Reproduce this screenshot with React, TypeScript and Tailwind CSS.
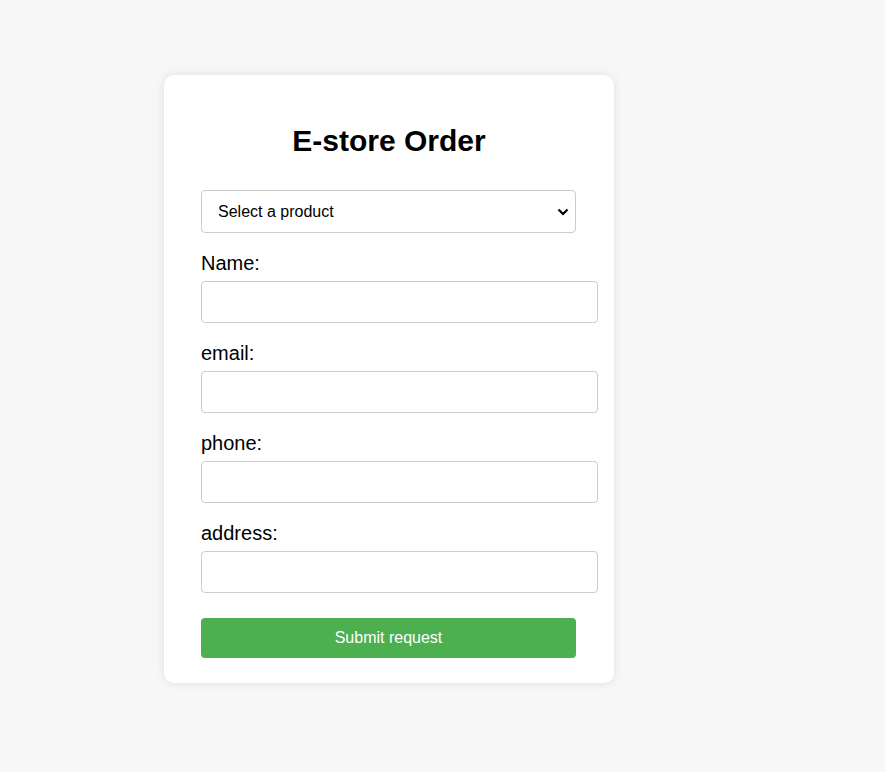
import React from 'react'

const fields = ['Name:', 'email:', 'phone:', 'address:']

export default function App(): JSX.Element {
  return (
    <div className="min-h-[772px] w-full bg-[#f7f7f7] pt-[75px] font-['Liberation_Sans',Arial,sans-serif] text-black">
      <div className="ml-[164px] w-[450px] rounded-[10px] bg-white px-[37px] pt-[49px] pb-[25px] shadow-[0_0_10px_rgba(0,0,0,0.1)]">
        <h1 className="text-center text-[30px] leading-[34px] font-bold">
          E-store Order
        </h1>
        <form className="mt-[32px]" onSubmit={e => e.preventDefault()}>
          <div className="relative w-[375px]">
            <select
              defaultValue=""
              className="block h-[43px] w-[375px] appearance-none rounded-[4px] border border-[#ccc] bg-white pl-[16px] pr-[30px] text-[16px] text-black"
            >
              <option value="">Select a product</option>
              <option value="1">Laptop</option>
              <option value="2">Phone</option>
            </select>
            <svg
              className="pointer-events-none absolute top-[18px] right-[7px]"
              width="12"
              height="8"
              viewBox="0 0 12 8"
              fill="none"
            >
              <path d="M1.5 1.5 L6 6 L10.5 1.5" stroke="#000" strokeWidth="2.2" />
            </svg>
          </div>
          {fields.map(label => (
            <div key={label} className="mt-[19px]">
              <label className="block text-[20px] leading-[22px]">{label}</label>
              <input
                type="text"
                className="mt-[7px] box-content block h-[20px] w-[375px] rounded-[4px] border border-[#ccc] bg-white p-[10px] text-[16px]"
              />
            </div>
          ))}
          <button
            type="submit"
            className="mt-[25px] block h-[40px] w-[375px] rounded-[4px] bg-[#4caf50] text-[16px] text-white"
          >
            Submit request
          </button>
        </form>
      </div>
    </div>
  )
}
